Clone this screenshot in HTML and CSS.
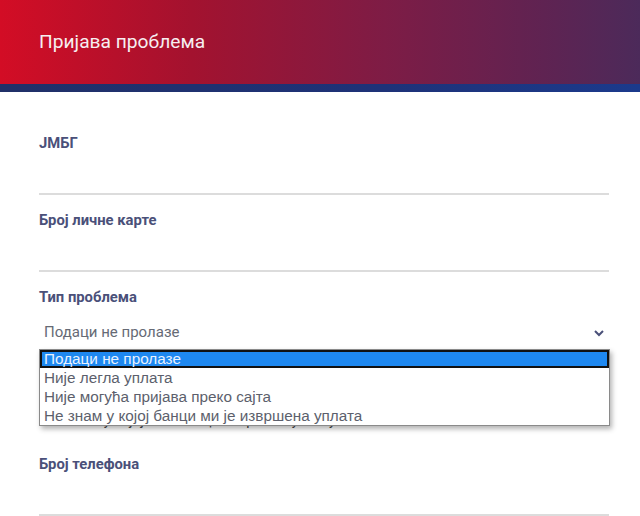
FILE: index.html
```html
<!DOCTYPE html>
<html lang="sr">
<head>
<meta charset="utf-8">
<link rel="stylesheet" href="styles.css">
</head>
<body>
<header class="hero">
  <h1 class="hero-title">Пријава проблема</h1>
</header>
<div class="hero-bar"></div>
<main class="form">
  <div class="field">
    <label class="label">ЈМБГ</label>
    <div class="input"></div>
  </div>
  <div class="field">
    <label class="label">Број личне карте</label>
    <div class="input"></div>
  </div>
  <div class="field field-select">
    <label class="label">Тип проблема</label>
    <div class="select">
      <span class="select-value">Подаци не пролазе</span>
      <svg class="chevron" width="12" height="8" viewBox="0 0 12 8"><path d="M2 2l4 4 4-4" fill="none" stroke="#4a5079" stroke-width="2"/></svg>
    </div>
    <ul class="dropdown">
      <li class="opt opt-active">Подаци не пролазе</li>
      <li class="opt">Није легла уплата</li>
      <li class="opt">Није могућа пријава преко сајта</li>
      <li class="opt">Не знам у којој банци ми је извршена уплата</li>
    </ul>
  </div>
  <div class="field field-hidden">
    <span class="hidden-text">Упишите у којој ћете банци извршити уплату</span>
  </div>
  <div class="field">
    <label class="label">Број телефона</label>
    <div class="input"></div>
  </div>
</main>
</body>
</html>
```
FILE: styles.css
```css
* { box-sizing: border-box; }
html, body { margin: 0; padding: 0; background: #fff; overflow: hidden; }
body { font-family: Roboto, "Noto Sans", sans-serif; width: 640px; height: 516px; }
.hero {
  height: 84px;
  background: linear-gradient(90deg, #d30d25 0%, #a3122f 30%, #7e1c45 60%, #5f2352 85%, #4c2a5a 100%);
  padding: 30px 0 0 39px;
}
.hero-title {
  margin: 0;
  color: #f6eef0;
  font-weight: 400;
  font-size: 19.2px;
  line-height: 24px;
}
.hero-bar {
  height: 8px;
  background: linear-gradient(90deg, #203068 0%, #1e3278 60%, #1b3a8c 100%);
}
.form {
  padding: 43px 31px 0 39px;
  display: flex;
  flex-direction: column;
}
.field { position: relative; display: flex; flex-direction: column; flex: none; }
.label {
  font-size: 14.8px;
  font-weight: 700;
  color: #4a5079;
  line-height: 16px;
  height: 16px;
}
.input {
  height: 44px;
  border-bottom: 2px solid #dcdcdc;
  margin-bottom: 17px;
}
.field-select { height: 123px; }
.select {
  margin-top: 15px;
  height: 24px;
  display: flex;
  align-items: center;
  justify-content: space-between;
  padding: 0 4px 0 5px;
}
.select-value { font-size: 15px; color: #666a75; }
.chevron { margin-top: 2px; }
.dropdown {
  position: absolute;
  left: 0;
  right: -1px;
  top: 60px;
  margin: 0;
  padding: 0;
  list-style: none;
  background: #fff;
  border: 1px solid #8a8a8a;
  box-shadow: 2px 3px 5px rgba(0,0,0,0.3);
  z-index: 2;
  font-family: "Liberation Sans", Arial, sans-serif;
  font-size: 15.3px;
}
.opt {
  height: 19px;
  line-height: 19px;
  padding-left: 4px;
  color: #5c5f6c;
}
.opt-active {
  height: 18px;
  background: #1e88f0;
  color: #e8f2ff;
  border: 2px solid #111;
  line-height: 14px;
  padding-left: 2px;
}
.field-hidden { height: 44px; }
.hidden-text { font-size: 14px; color: #444; padding-left: 4px; line-height: 16px; }
```
